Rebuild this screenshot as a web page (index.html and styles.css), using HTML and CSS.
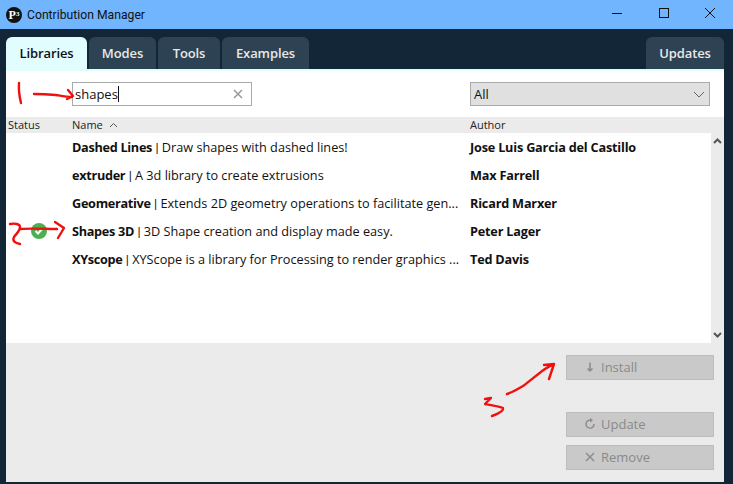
FILE: index.html
```html
<!DOCTYPE html>
<html lang="en">
<head>
    <meta charset="UTF-8">
    <title>Contribution Manager</title>
    <link rel="stylesheet" href="styles.css">
</head>
<body>
    <div class="window">
        <!-- Title bar -->
        <div class="titlebar">
            <span class="logo">P<span class="logo-sup">3</span></span>
            <span class="title">Contribution Manager</span>
            <div class="win-controls">
                <svg width="46" height="29" viewBox="0 0 46 29"><path d="M17 13.5H27" stroke="#111" fill="none"/></svg>
                <svg width="46" height="29" viewBox="0 0 46 29"><rect x="18.5" y="8.5" width="9" height="9" stroke="#111" fill="none"/></svg>
                <svg width="46" height="29" viewBox="0 0 46 29"><path d="M18 8L28 18M28 8L18 18" stroke="#111" fill="none"/></svg>
            </div>
        </div>

        <!-- Tabs -->
        <div class="tabs">
            <div class="tab active tab-libraries">Libraries</div>
            <div class="tab tab-modes">Modes</div>
            <div class="tab tab-tools">Tools</div>
            <div class="tab tab-examples">Examples</div>
            <div class="tab tab-updates">Updates</div>
        </div>

        <div class="panel">
            <!-- Filter -->
            <div class="filters">
                <div class="search">
                    <span class="search-text">shapes</span><span class="caret"></span>
                    <svg class="search-clear" width="10" height="10" viewBox="0 0 10 10"><path d="M1 1L9 9M9 1L1 9" stroke="#999" stroke-width="1.5" fill="none"/></svg>
                </div>
                <div class="category">
                    <span>All</span>
                    <svg width="12" height="7" viewBox="0 0 12 7"><path d="M1 1L6 6L11 1" stroke="#666" fill="none"/></svg>
                </div>
            </div>

            <!-- Table -->
            <div class="table-head">
                <div class="col-status">Status</div>
                <div class="col-name">Name
                    <svg width="9" height="6" viewBox="0 0 9 6"><path d="M1 5L4.5 1.5L8 5" stroke="#555" fill="none"/></svg>
                </div>
                <div class="col-author">Author</div>
            </div>
            <div class="table-body">
                <div class="rows">
                    <div class="row">
                        <div class="col-status"></div>
                        <div class="col-name"><b>Dashed Lines</b> <span class="sep">|</span> Draw shapes with dashed lines!</div>
                        <div class="col-author"><b>Jose Luis Garcia del Castillo</b></div>
                    </div>
                    <div class="row">
                        <div class="col-status"></div>
                        <div class="col-name"><b>extruder</b> <span class="sep">|</span> A 3d library to create extrusions</div>
                        <div class="col-author"><b>Max Farrell</b></div>
                    </div>
                    <div class="row">
                        <div class="col-status"></div>
                        <div class="col-name"><b>Geomerative</b> <span class="sep">|</span> Extends 2D geometry operations to facilitate gen...</div>
                        <div class="col-author"><b>Ricard Marxer</b></div>
                    </div>
                    <div class="row">
                        <div class="col-status">
                            <svg class="check" width="16" height="16" viewBox="0 0 16 16"><circle cx="8" cy="8" r="8" fill="#4caf50"/><path d="M4.5 8L7 10.5L11.5 5.5" stroke="#fff" stroke-width="2" fill="none"/></svg>
                        </div>
                        <div class="col-name"><b>Shapes 3D</b> <span class="sep">|</span> 3D Shape creation and display made easy.</div>
                        <div class="col-author"><b>Peter Lager</b></div>
                    </div>
                    <div class="row">
                        <div class="col-status"></div>
                        <div class="col-name"><b>XYscope</b> <span class="sep">|</span> XYScope is a library for Processing to render graphics ...</div>
                        <div class="col-author"><b>Ted Davis</b></div>
                    </div>
                </div>
                <div class="scrollbar">
                    <svg width="9" height="6" viewBox="0 0 9 6"><path d="M1 5L4.5 1.5L8 5" stroke="#555" stroke-width="2" fill="none"/></svg>
                    <svg width="9" height="6" viewBox="0 0 9 6"><path d="M1 1L4.5 4.5L8 1" stroke="#555" stroke-width="2" fill="none"/></svg>
                </div>
            </div>

            <!-- Actions -->
            <div class="actions">
                <div class="btn btn-install">
                    <svg width="12" height="12" viewBox="0 0 12 12"><path d="M6 1.5V10M3.5 7.5L6 10L8.5 7.5" stroke="#8a8a8a" stroke-width="1.5" fill="none"/></svg>
                    <span>Install</span>
                </div>
                <div class="btn btn-update">
                    <svg width="12" height="12" viewBox="0 0 12 12"><path d="M6.5 2.2A4 4 0 1 0 10 6" stroke="#8a8a8a" stroke-width="1.4" fill="none"/><path d="M6 0L9 2.2L6 4.4Z" fill="#8a8a8a"/></svg>
                    <span>Update</span>
                </div>
                <div class="btn">
                    <svg width="12" height="12" viewBox="0 0 12 12"><path d="M2 2L10 10M10 2L2 10" stroke="#8a8a8a" stroke-width="1.4" fill="none"/></svg>
                    <span>Remove</span>
                </div>
            </div>
        </div>

        <!-- Red marks drawn over the screenshot -->
        <svg class="marks" width="733" height="484" viewBox="0 0 733 484">
            <g stroke="#f01010" stroke-width="2.4" fill="none" stroke-linecap="round" stroke-linejoin="round">
                <path d="M19 83C18.500 90 19.500 97 21 103"/>
                <path d="M34 94C42 94 50 94.500 56 95C62 96 67 97 72 97M68 90L73 96L67 99"/>
                <path d="M10 224C15 223 20 224 20 227C20 231 16 234 14 237C12 241 15 243 20 244"/>
                <path d="M21 229C30 228 45 229 57 229M55 222L64 228L58 238"/>
                <path d="M507 394C513 392 518 389 523 386C531 380 538 374 545 369C548 367 551 365 553 365M544 365L554 364L549 379"/>
                <path d="M485 399L491 398L485 404C491 405 498 406 503 408C504 411 498 414 492 416"/>
            </g>
        </svg>
    </div>
</body>
</html>
```

FILE: styles.css
```css
/* Reset and Base Styles */
* {
    margin: 0;
    padding: 0;
    box-sizing: border-box;
}
html, body {
    height: 100%;
    overflow: hidden;
}
body {
    background-color: #132638;
    color: #111;
    font-family: 'Open Sans', 'Noto Sans', Arial, sans-serif;
    font-size: 12.7px;
}
b {
    letter-spacing: -0.2px;
}
.window {
    position: relative;
    width: 733px;
    height: 484px;
    display: flex;
    flex-direction: column;
}

/* Title bar */
.titlebar {
    height: 29px;
    background: #70b5fd;
    display: flex;
    align-items: center;
    padding-left: 6px;
    flex: none;
}
.logo {
    width: 16px;
    height: 16px;
    border-radius: 50%;
    background: #111;
    color: #fff;
    font-family: 'Liberation Serif', serif;
    font-size: 12px;
    font-weight: bold;
    line-height: 17px;
    text-align: center;
    margin-right: 5px;
}
.logo-sup {
    font-size: 7px;
    vertical-align: 3px;
    line-height: 0;
}
.title {
    font-family: Roboto, sans-serif;
    font-size: 12.2px;
    color: #111;
}
.win-controls {
    margin-left: auto;
    display: flex;
}

/* Tabs */
.tabs {
    display: flex;
    gap: 2px;
    margin: 8px 9px 0 6px;
    height: 32px;
    flex: none;
}
.tab {
    background: #2d4252;
    color: #e8e8e8;
    font-weight: 600;
    font-size: 13px;
    letter-spacing: -0.1px;
    border-radius: 6px 6px 0 0;
    display: flex;
    align-items: center;
    justify-content: center;
}
.tab.active {
    background: #e2fdfd;
    color: #111;
}
.tab-libraries { width: 81px; }
.tab-modes { width: 67px; }
.tab-tools { width: 62px; }
.tab-examples { width: 87px; }
.tab-updates { width: 78px; margin-left: auto; }

/* Panel */
.panel {
    margin: 0 9px 2px 6px;
    background: #fff;
    border-top: 2px solid #e2fdfd;
    flex: 1;
    display: flex;
    flex-direction: column;
}
.filters {
    height: 46px;
    flex: none;
    padding-top: 11px;
    display: flex;
    padding-left: 66px;
}
.search {
    width: 180px;
    height: 24px;
    border: 1px solid #aaa;
    display: flex;
    align-items: center;
    padding: 0 8px 0 2px;
    font-size: 13px;
}
.caret {
    width: 1px;
    height: 16px;
    background: #111;
}
.search-clear {
    margin-left: auto;
}
.category {
    width: 240px;
    height: 24px;
    margin-left: 218px;
    background: #e0e0e0;
    border: 1px solid #aaa;
    display: flex;
    align-items: center;
    justify-content: space-between;
    padding: 0 4px 0 3px;
    font-size: 13px;
}

/* Table */
.table-head {
    height: 16px;
    flex: none;
    margin-right: 13px;
    padding-bottom: 2px;
    background: #ebebeb;
    display: flex;
    align-items: center;
    font-size: 11px;
    color: #222;
}
.col-status {
    width: 66px;
    padding-left: 2px;
    flex: none;
}
.col-name {
    width: 398px;
    flex: none;
    white-space: nowrap;
}
.col-name b {
    letter-spacing: -0.3px;
}
.col-name svg {
    margin-left: 3px;
    vertical-align: 1px;
}
.col-author {
    flex: 1;
}
.sep {
    font-family: Roboto, sans-serif;
}
.table-body {
    height: 210px;
    flex: none;
    display: flex;
}
.rows {
    flex: 1;
}
.row {
    height: 28px;
    display: flex;
    align-items: center;
}
.row .col-status {
    padding-left: 25px;
    display: flex;
    align-items: center;
}
.scrollbar {
    width: 13px;
    margin-top: -16px;
    background: #ebebeb;
    display: flex;
    flex-direction: column;
    justify-content: space-between;
    align-items: center;
    padding: 21px 0 5px;
}

/* Actions */
.actions {
    flex: 1;
    background: #ebebeb;
    display: flex;
    flex-direction: column;
    align-items: flex-end;
    padding: 12px 10px 0 0;
}
.btn {
    width: 148px;
    height: 25px;
    background: #c9c9c9;
    border: 1px solid #bdbdbd;
    color: #8a8a8a;
    font-weight: 500;
    font-size: 13px;
    display: flex;
    align-items: center;
    gap: 5px;
    padding: 0 0 2px 17px;
}
.btn-install {
    margin-bottom: 32px;
}
.btn-update {
    margin-bottom: 8px;
}

/* Red marks */
.marks {
    position: absolute;
    left: 0;
    top: 0;
    pointer-events: none;
}
```
